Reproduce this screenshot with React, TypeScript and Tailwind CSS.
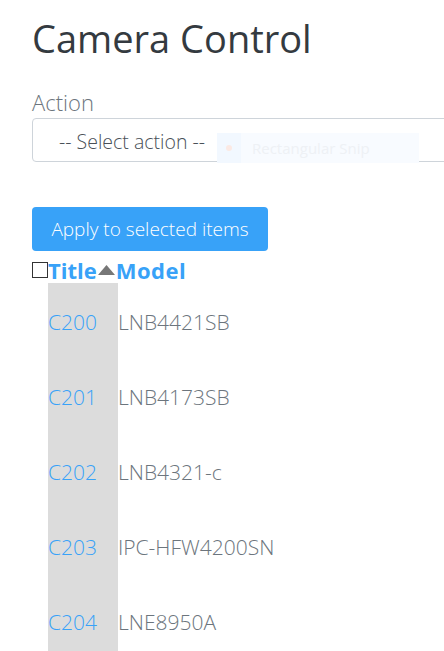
import React from "react";

const rows = [
  { title: "C200", model: "LNB4421SB" },
  { title: "C201", model: "LNB4173SB" },
  { title: "C202", model: "LNB4321-c" },
  { title: "C203", model: "IPC-HFW4200SN" },
  { title: "C204", model: "LNE8950A" },
];

export default function App() {
  return (
    <div className="h-[651px] w-[444px] overflow-hidden bg-white pl-8 font-['Open_Sans',sans-serif]">
      <h1 className="pt-[12px] text-[38px] leading-[52px] font-normal text-[#343a40]">Camera Control</h1>

      <div className="mt-[25px]">
        <label className="block text-[22px] leading-[26px] font-light text-[#6c757d]">Action</label>
        <div className="relative mt-[3px] flex h-[44px] w-[500px] items-center rounded border border-[#ced4da] pt-[3px] pl-[26px] text-[19.5px] font-light text-[#495057]">
          -- Select action --
          <div className="absolute top-[14px] left-[184px] flex h-[30px] w-[202px] items-center bg-[#f8fbff]">
            <div className="flex h-full w-[24px] items-center justify-center bg-[#f2f8ff]">
              <span className="h-[6px] w-[6px] rounded-full bg-[#fbe9e4]" />
            </div>
            <span className="ml-[11px] text-[15px] font-normal text-[#eef1f5]">Rectangular Snip</span>
          </div>
        </div>
      </div>

      <button className="mt-[45px] h-[44px] w-[236px] rounded bg-[#38a2f8] text-[19px] font-light text-white">
        Apply to selected items
      </button>

      <div className="mt-[7px] flex h-[24px] items-center">
        <span className="h-[16px] w-[16px] border border-[#333] bg-white" />
        <span className="text-[22px] leading-none font-bold text-[#38a2f8]">Title</span>
        <svg width="17" height="10" viewBox="0 0 17 10" className="mx-[1px]">
          <polygon points="8.5,0 17,10 0,10" fill="#777" />
        </svg>
        <span className="text-[22px] leading-none font-bold tracking-[0.5px] text-[#38a2f8]">Model</span>
      </div>

      <div className="mt-[1px]">
        {rows.map((r) => (
          <div key={r.title} className="flex h-[75px] items-center">
            <div className="ml-[16px] flex h-full w-[70px] items-center bg-[#dcdcdc] pt-[5px] text-[21px] font-light text-[#38a2f8]">
              {r.title}
            </div>
            <div className="pt-[5px] text-[21px] font-light text-[#6c757d]">{r.model}</div>
          </div>
        ))}
      </div>
    </div>
  );
}
